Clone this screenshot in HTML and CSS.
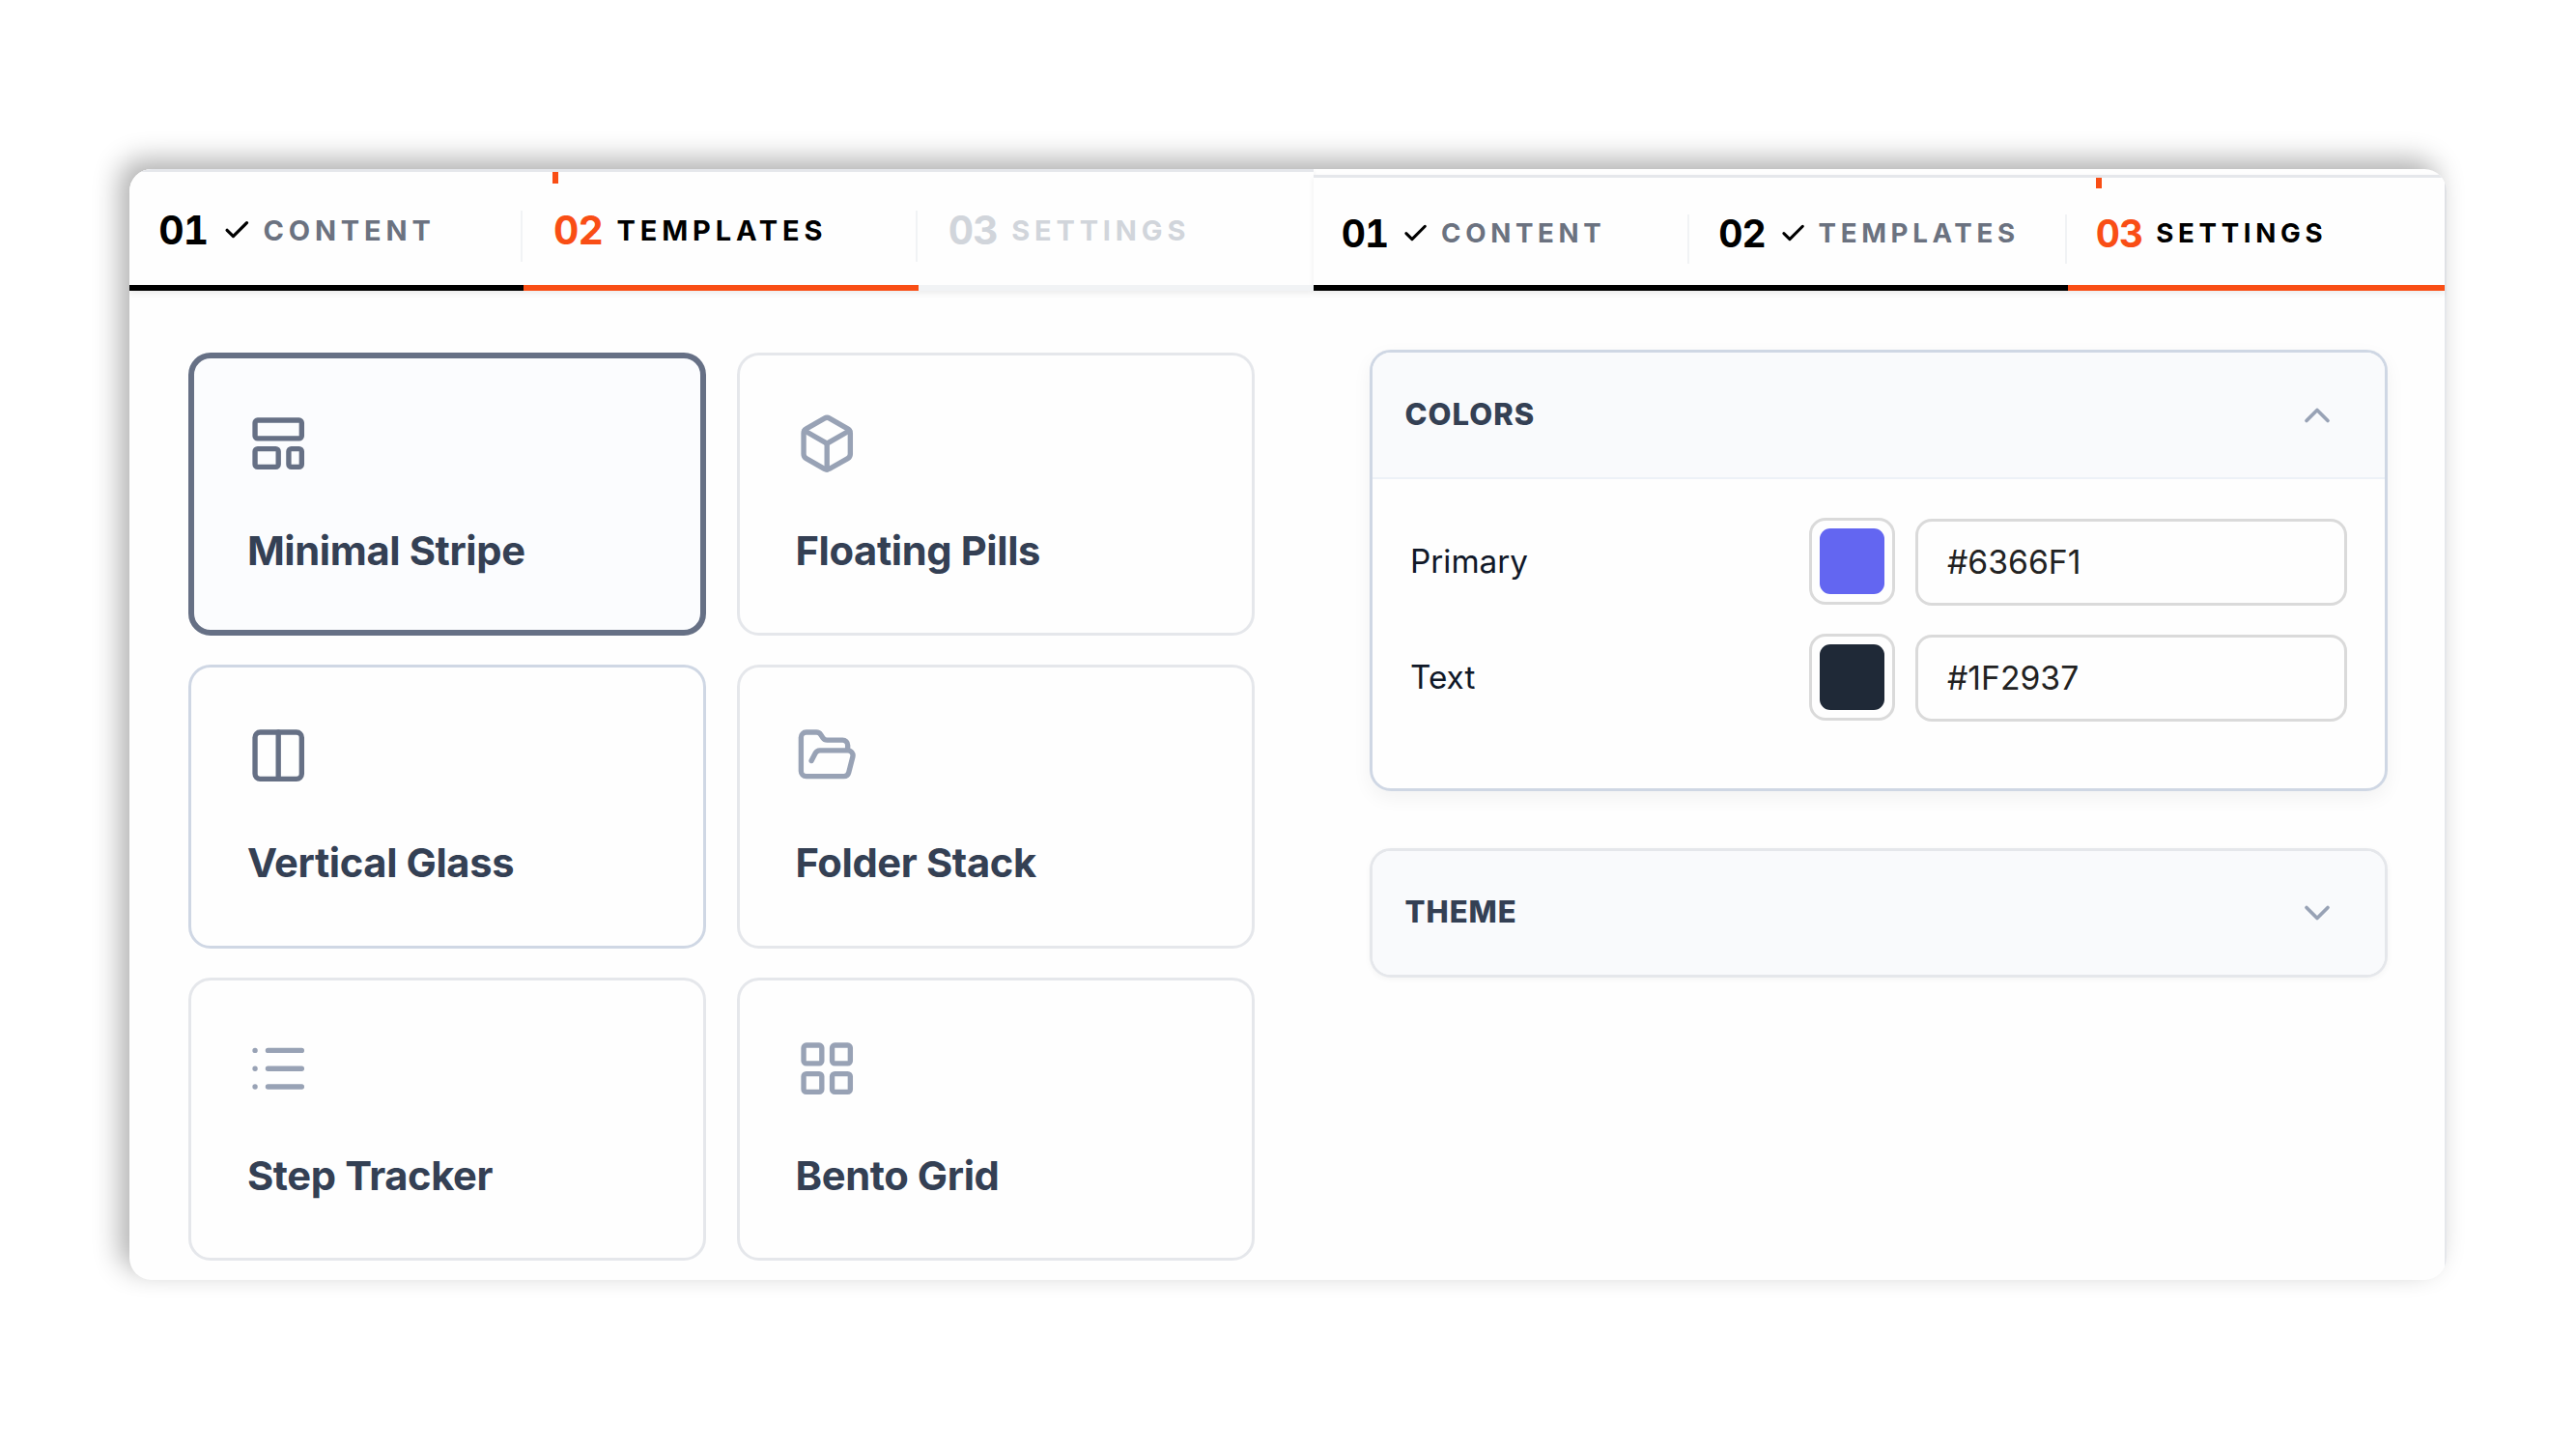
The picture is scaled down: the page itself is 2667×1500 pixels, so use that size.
FILE: index.html
```html
<!DOCTYPE html>
<html lang="en">
<head>
<meta charset="utf-8">
<title>Template builder</title>
<link rel="stylesheet" href="styles.css">
</head>
<body>
<main class="window">
  <section class="pane pane-templates">
    <nav class="steps">
      <div class="step done"><span class="num">01</span><svg class="check" viewBox="0 0 24 24"><path d="M20 6 9 17l-5-5"/></svg><span class="label">CONTENT</span><i class="divider"></i></div>
      <div class="step active"><span class="num">02</span><span class="label">TEMPLATES</span><i class="divider"></i></div>
      <div class="step pending"><span class="num">03</span><span class="label">SETTINGS</span></div>
    </nav>
    <div class="grid">
      <article class="card selected">
        <svg class="icon" viewBox="0 0 24 24"><rect x="3" y="3" width="18" height="7" rx="1"/><rect x="3" y="14" width="9" height="7" rx="1"/><rect x="16" y="14" width="5" height="7" rx="1"/></svg>
        <h3>Minimal Stripe</h3>
      </article>
      <article class="card">
        <svg class="icon" viewBox="0 0 24 24"><path d="M21 8a2 2 0 0 0-1-1.73l-7-4a2 2 0 0 0-2 0l-7 4A2 2 0 0 0 3 8v8a2 2 0 0 0 1 1.73l7 4a2 2 0 0 0 2 0l7-4A2 2 0 0 0 21 16Z"/><path d="m3.3 7 8.7 5 8.7-5"/><path d="M12 22V12"/></svg>
        <h3>Floating Pills</h3>
      </article>
      <article class="card hovered">
        <svg class="icon" viewBox="0 0 24 24"><rect x="3" y="3" width="18" height="18" rx="2"/><path d="M12 3v18"/></svg>
        <h3>Vertical Glass</h3>
      </article>
      <article class="card">
        <svg class="icon" viewBox="0 0 24 24"><path d="m6 14 1.5-2.9A2 2 0 0 1 9.24 10H20a2 2 0 0 1 1.94 2.5l-1.54 6a2 2 0 0 1-1.95 1.5H4a2 2 0 0 1-2-2V5a2 2 0 0 1 2-2h3.9a2 2 0 0 1 1.69.9l.81 1.2a2 2 0 0 0 1.67.9H18a2 2 0 0 1 2 2v2"/></svg>
        <h3>Folder Stack</h3>
      </article>
      <article class="card">
        <svg class="icon" viewBox="0 0 24 24"><path d="M3 5h.01M3 12h.01M3 19h.01M8 5h13M8 12h13M8 19h13"/></svg>
        <h3>Step Tracker</h3>
      </article>
      <article class="card">
        <svg class="icon" viewBox="0 0 24 24"><rect x="3" y="3" width="7" height="7" rx="1"/><rect x="14" y="3" width="7" height="7" rx="1"/><rect x="14" y="14" width="7" height="7" rx="1"/><rect x="3" y="14" width="7" height="7" rx="1"/></svg>
        <h3>Bento Grid</h3>
      </article>
    </div>
  </section>

  <section class="pane pane-settings">
    <nav class="steps">
      <div class="step done"><span class="num">01</span><svg class="check" viewBox="0 0 24 24"><path d="M20 6 9 17l-5-5"/></svg><span class="label">CONTENT</span><i class="divider"></i></div>
      <div class="step done"><span class="num">02</span><svg class="check" viewBox="0 0 24 24"><path d="M20 6 9 17l-5-5"/></svg><span class="label">TEMPLATES</span><i class="divider"></i></div>
      <div class="step active"><span class="num">03</span><span class="label">SETTINGS</span></div>
    </nav>
    <div class="accordions">
      <article class="accordion open">
        <header class="accordion-head"><h4>COLORS</h4><svg class="chevron" viewBox="0 0 24 24"><path d="m18 15-6-6-6 6"/></svg></header>
        <div class="accordion-body">
          <div class="field"><span class="field-name">Primary</span><span class="swatch"><span class="fill primary"></span></span><span class="hex">#6366F1</span></div>
          <div class="field"><span class="field-name">Text</span><span class="swatch"><span class="fill text"></span></span><span class="hex">#1F2937</span></div>
        </div>
      </article>
      <article class="accordion">
        <header class="accordion-head"><h4>THEME</h4><svg class="chevron" viewBox="0 0 24 24"><path d="m6 9 6 6 6-6"/></svg></header>
      </article>
    </div>
  </section>
</main>
</body>
</html>
```
FILE: styles.css
```css
* { box-sizing: border-box; }

body {
  margin: 0;
  height: 1500px;
  padding: 175px 133.5px;
  background: #fff;
  font-family: Inter, "Liberation Sans", sans-serif;
  overflow: hidden;
}

.window {
  display: flex;
  width: 2399.5px;
  height: 1150px;
  border-radius: 23px;
  background: #fefefe;
  overflow: hidden;
  box-shadow: -10px -10px 28px rgba(0, 0, 0, .31);
}

.pane-templates { width: 1226px; }
.pane-settings {
  width: 1173.5px;
  padding-top: 6px;
  border-right: 2px solid #e5e7eb;
}

/* Step header */
.steps {
  display: flex;
  height: 126px;
  border-top: 3px solid #e5e7eb;
  background: #fefefe;
  box-shadow: 0 3px 6px rgba(0, 0, 0, .07);
}
.pane-settings .steps { height: 120px; }

.step {
  position: relative;
  flex: 1;
  display: flex;
  align-items: center;
  gap: 12px;
  padding: 4px 0 0 30.8px;
  border-bottom: 6px solid #f1f3f5;
  line-height: 1;
  color: #d1d5db;
}
.num {
  width: 53.5px;
  font-size: 40.8px;
  font-weight: 700;
  letter-spacing: -.8px;
  font-variant-numeric: tabular-nums;
}
.label {
  font-size: 29px;
  font-weight: 650;
  letter-spacing: 4.85px;
}
.check {
  width: 30.6px;
  height: 30.6px;
  fill: none;
  stroke: #000;
  stroke-width: 2.5;
  stroke-linecap: round;
  stroke-linejoin: round;
}
.divider {
  width: 2px;
  height: 53px;
  margin: 12px 1px 0 auto;
  background: #f1f3f5;
}

.pane-settings .step { gap: 11.6px; padding-left: 29.2px; }
.pane-settings .num { width: 51px; font-size: 39px; }
.pane-settings .label { font-size: 27.7px; letter-spacing: 4.65px; }
.pane-settings .check { width: 29.2px; height: 29.2px; }
.pane-settings .divider { height: 51px; }

.step.done { border-color: #000; }
.step.done .num { color: #000; }
.step.done .label { color: #6b7280; }
.step.active { border-color: #f94e15; }
.step.active .num { color: #f94e15; }
.step.active .label { color: #000; }
.step.active::before {
  content: "";
  position: absolute;
  top: 0;
  left: 30.2px;
  width: 6px;
  height: 12px;
  background: #f94e15;
}
.pane-settings .step.active::before { left: 29px; height: 11px; }

/* Template cards */
.grid {
  display: grid;
  grid-template-columns: repeat(2, 536px);
  grid-auto-rows: 293.3px;
  gap: 30.2px 31.6px;
  padding: 64px 0 0 61.6px;
}
.card {
  padding: 59px 0 0 58.3px;
  border: 3px solid #e5e7eb;
  border-radius: 23px;
  background: #fefefe;
}
.card.hovered { border-color: #cfd7e4; }
.card.selected {
  padding: 56px 0 0 55.3px;
  border: 6px solid #667085;
  background: #fbfcfe;
}
.icon {
  display: block;
  width: 64.4px;
  height: 64.4px;
  fill: none;
  stroke: #98a2b5;
  stroke-width: 2;
  stroke-linecap: round;
  stroke-linejoin: round;
}
.selected .icon, .hovered .icon { stroke: #667085; }
.card h3 {
  margin: 53.5px 0 0 -.5px;
  font-size: 41.7px;
  font-weight: 700;
  line-height: 50px;
  letter-spacing: -.38px;
  color: #344054;
}

/* Settings accordions */
.accordions {
  display: flex;
  flex-direction: column;
  gap: 58.6px;
  padding: 61px 59.5px 0 58.5px;
}
.accordion {
  height: 134px;
  border: 3px solid #e5e7eb;
  border-radius: 22px;
  background: #fefefe;
  overflow: hidden;
  box-shadow: 0 2px 6px rgba(0, 0, 0, .04);
}
.accordion.open {
  height: 457px;
  border-color: #cfd7e4;
  box-shadow: 0 7px 20px rgba(0, 0, 0, .05);
}
.accordion-head {
  display: flex;
  align-items: center;
  justify-content: space-between;
  height: 128px;
  padding: 0 47.5px 2px 33.5px;
  background: #f9fafc;
}
.open .accordion-head {
  height: 131px;
  border-bottom: 2.5px solid #edf1f7;
}
.accordion-head h4 {
  margin: 0;
  font-size: 31px;
  font-weight: 800;
  line-height: 38px;
  letter-spacing: 1px;
  color: #344054;
}
.chevron {
  width: 44px;
  height: 44px;
  margin-top: 2px;
  fill: none;
  stroke: #98a2b5;
  stroke-width: 2;
  stroke-linecap: round;
  stroke-linejoin: round;
}
.accordion-body {
  display: flex;
  flex-direction: column;
  gap: 30.4px;
  padding: 39.5px 39px 0 39px;
}
.field { display: flex; align-items: center; height: 90px; }
.field-name {
  flex: 1;
  font-size: 33.3px;
  line-height: 40px;
  color: #101828;
}
.swatch {
  width: 89px;
  height: 90px;
  padding: 8px;
  border: 3px solid #dadada;
  border-radius: 17px;
}
.fill { display: block; height: 68px; border-radius: 11px; }
.fill.primary { background: #6366f1; }
.fill.text { background: #1f2937; }
.hex {
  width: 447px;
  height: 90px;
  margin: 2px 0 0 20.5px;
  padding-left: 30.5px;
  border: 3px solid #dadada;
  border-radius: 17px;
  font-size: 33.7px;
  line-height: 83px;
  color: #222;
}
```
